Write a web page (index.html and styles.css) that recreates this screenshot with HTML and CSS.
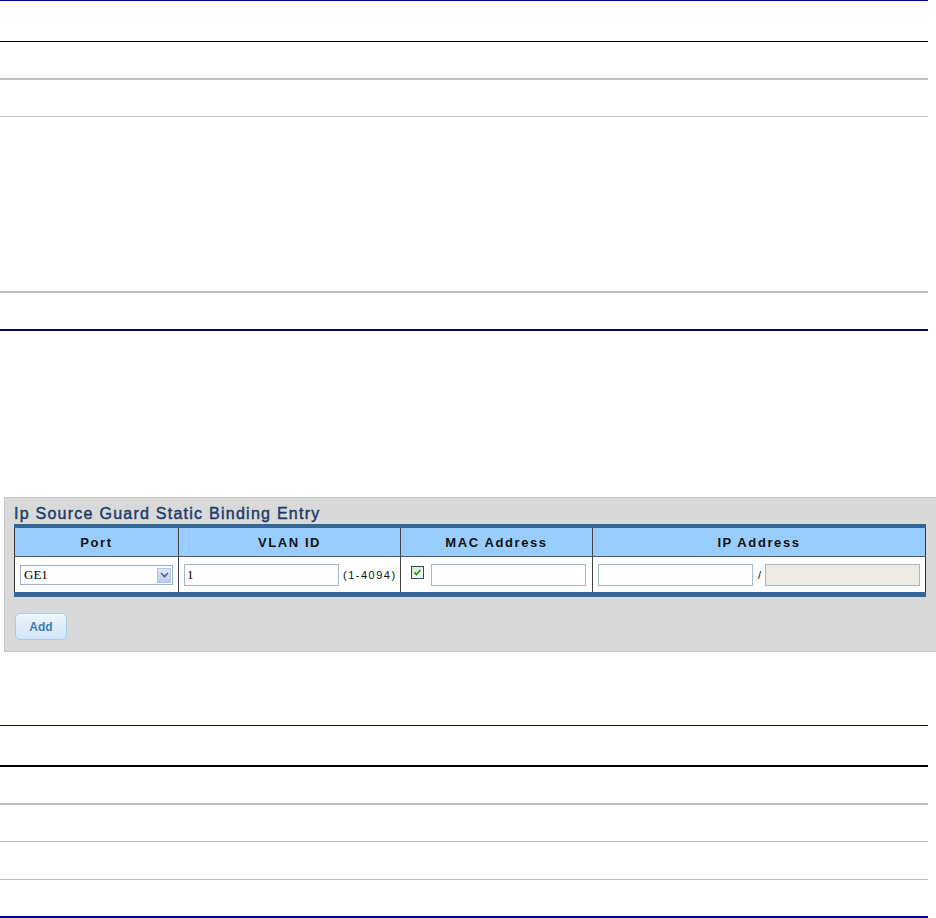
FILE: index.html
```html
<!DOCTYPE html>
<html>
<head>
<meta charset="utf-8">
<link rel="stylesheet" href="styles.css">
</head>
<body>
<div class="doc doc-top">
  <div class="drow r40 b-black1"></div>
  <div class="drow r36 b-gray2"></div>
  <div class="drow r36 b-gray1"></div>
  <div class="drow r174 b-gray2"></div>
  <div class="drow r36 b-navy2"></div>
</div>

<div class="panel">
  <div class="panel-title">Ip Source Guard Static Binding Entry</div>
  <table class="grid">
    <thead>
      <tr>
        <th class="c1">Port</th>
        <th class="c2">VLAN ID</th>
        <th class="c3">MAC Address</th>
        <th class="c4">IP Address</th>
      </tr>
    </thead>
    <tbody>
      <tr>
        <td>
          <div class="select">
            <span class="select-val">GE1</span>
            <span class="select-btn">
              <svg width="9" height="6" viewBox="0 0 9 6"><path d="M1 1 L4.5 4.5 L8 1" fill="none" stroke="#4d6185" stroke-width="1.6"/></svg>
            </span>
          </div>
        </td>
        <td>
          <div class="cellrow">
            <div class="input w-vlan">1</div>
            <span class="hint">(1-4094)</span>
          </div>
        </td>
        <td>
          <div class="cellrow">
            <span class="check">
              <svg width="11" height="11" viewBox="0 0 11 11"><path d="M2.5 5.5 L4.5 7.5 L8.5 3" fill="none" stroke="#21a121" stroke-width="1.8"/></svg>
            </span>
            <div class="input w-mac"></div>
          </div>
        </td>
        <td>
          <div class="cellrow">
            <div class="input w-ip"></div>
            <span class="slash">/</span>
            <div class="input w-mask disabled"></div>
          </div>
        </td>
      </tr>
    </tbody>
  </table>
  <button class="btn">Add</button>
</div>

<div class="doc doc-bottom">
  <div class="drow r39 b-black2"></div>
  <div class="drow r36 b-gray2"></div>
  <div class="drow r36 b-gray1"></div>
  <div class="drow r37 b-gray1"></div>
  <div class="drow r36 b-navy2"></div>
</div>
</body>
</html>
```

FILE: styles.css
```css
html, body {
  margin: 0;
  padding: 0;
  background: #ffffff;
  font-family: "Liberation Sans", Arial, sans-serif;
}

.doc {
  width: 928px;
  border-top: 1px solid #000080;
}

.drow { box-sizing: content-box; }
.r39 { height: 39px; }
.r40 { height: 40px; }
.r36 { height: 36px; }
.r37 { height: 37px; }
.r174 { height: 174px; }

.b-black1 { border-bottom: 1px solid #000000; }
.b-black2 { border-bottom: 2px solid #000000; }
.b-gray1 { border-bottom: 1px solid #c0c0c0; }
.b-gray2 { border-bottom: 2px solid #c0c0c0; }
.b-navy2 { border-bottom: 2px solid #000080; }

.panel {
  margin: 166px 0 0 4px;
  background: #d9d9d9;
  border: 1px solid #c4c4c4;
  padding: 6px 0 0 9px;
  box-sizing: content-box;
  width: 922px;
  height: 147px;
}

.panel-title {
  font-size: 16px;
  line-height: 20px;
  height: 20px;
  color: #1c3d6a;
  letter-spacing: 1.25px;
  font-weight: normal;
  -webkit-text-stroke: 0.45px #1c3d6a;
}

.grid {
  border-collapse: collapse;
  width: 912px;
  table-layout: fixed;
  border-top: 4px solid #336699;
  border-bottom: 5px solid #336699;
  border-left: 1px solid #333333;
  border-right: 1px solid #333333;
  background: #ffffff;
}

.grid th {
  background: #99ccff;
  height: 28px;
  padding: 0;
  font-size: 13px;
  font-weight: bold;
  letter-spacing: 1.6px;
  color: #111111;
  text-align: center;
  border-left: 1px solid #444444;
  border-bottom: 1px solid #555555;
}
.grid th:first-child { border-left: none; }

.c1 { width: 163px; }
.c2 { width: 221px; }
.c3 { width: 191px; }
.c4 { width: auto; }

.grid td {
  height: 35px;
  padding: 0 0 0 5px;
  border-left: 1px solid #444444;
  vertical-align: middle;
}
.grid td:first-child { border-left: none; }

.cellrow {
  display: flex;
  align-items: center;
}

.select {
  width: 153px;
  height: 20px;
  border: 1px solid #9bb1cc;
  background: #ffffff;
  box-sizing: border-box;
  display: flex;
  align-items: center;
  justify-content: space-between;
  padding: 0 1px 0 3px;
  margin-top: 1px;
}
.select-val {
  font-family: "Liberation Serif", "Times New Roman", serif;
  font-size: 13px;
  color: #000;
}
.select-btn {
  width: 14px;
  height: 15px;
  box-sizing: border-box;
  background: linear-gradient(#dfe8fb, #b9cbf3);
  border: 1px solid #b4c4e6;
  display: flex;
  align-items: center;
  justify-content: center;
}

.input {
  height: 22px;
  border: 1px solid #a7b8cc;
  background: #ffffff;
  box-sizing: border-box;
  font-family: "Liberation Serif", "Times New Roman", serif;
  font-size: 13px;
  line-height: 20px;
  padding-left: 2px;
  color: #000;
}
.w-vlan { width: 155px; }
.w-mac { width: 155px; margin-left: 7px; }
.w-ip { width: 155px; }
.w-mask { width: 155px; }
.disabled { background: #ebebe4; }

.hint {
  font-size: 11px;
  letter-spacing: 1.5px;
  margin-left: 4px;
  color: #111;
}
.slash {
  font-size: 11px;
  margin: 0 4px 0 5px;
  color: #111;
}

.check {
  width: 13px;
  height: 13px;
  box-sizing: border-box;
  border: 1px solid #1c5180;
  background: linear-gradient(135deg, #dcdcd7, #ffffff);
  display: flex;
  align-items: center;
  justify-content: center;
  margin-left: 5px;
  margin-top: -4px;
}

.btn {
  display: block;
  margin: 16px 0 0 1px;
  width: 52px;
  height: 27px;
  border: 1px solid #a9cde6;
  border-radius: 5px;
  background: linear-gradient(#eef6fc, #cfe5f5);
  font-family: "Liberation Sans", Arial, sans-serif;
  font-size: 12px;
  font-weight: bold;
  color: #3f7fb3;
  padding: 0;
}

.doc-bottom { margin-top: 73px; }
```
